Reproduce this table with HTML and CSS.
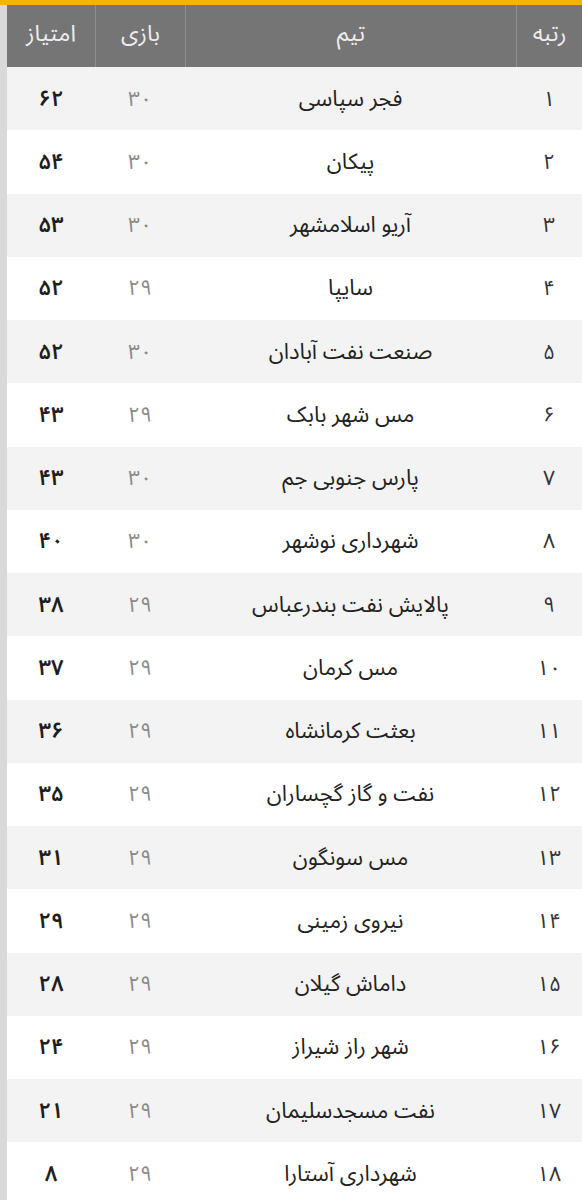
FILE: index.html
```html
<!DOCTYPE html>
<html lang="fa" dir="rtl">
<head>
<meta charset="utf-8">
<link rel="stylesheet" href="styles.css">
</head>
<body>
<div class="page">
  <div class="topbar"></div>
  <div class="frame">
    <div class="strip"></div>
    <div class="table">
      <div class="row head">
        <div class="c rank">رتبه</div>
        <div class="c team">تیم</div>
        <div class="c games">بازی</div>
        <div class="c pts">امتیاز</div>
      </div>
      <div class="row"><div class="c rank">۱</div><div class="c team">فجر سپاسی</div><div class="c games">۳۰</div><div class="c pts">۶۲</div></div>
      <div class="row"><div class="c rank">۲</div><div class="c team">پیکان</div><div class="c games">۳۰</div><div class="c pts">۵۴</div></div>
      <div class="row"><div class="c rank">۳</div><div class="c team">آریو اسلامشهر</div><div class="c games">۳۰</div><div class="c pts">۵۳</div></div>
      <div class="row"><div class="c rank">۴</div><div class="c team">سایپا</div><div class="c games">۲۹</div><div class="c pts">۵۲</div></div>
      <div class="row"><div class="c rank">۵</div><div class="c team">صنعت نفت آبادان</div><div class="c games">۳۰</div><div class="c pts">۵۲</div></div>
      <div class="row"><div class="c rank">۶</div><div class="c team">مس شهر بابک</div><div class="c games">۲۹</div><div class="c pts">۴۳</div></div>
      <div class="row"><div class="c rank">۷</div><div class="c team">پارس جنوبی جم</div><div class="c games">۳۰</div><div class="c pts">۴۳</div></div>
      <div class="row"><div class="c rank">۸</div><div class="c team">شهرداری نوشهر</div><div class="c games">۳۰</div><div class="c pts">۴۰</div></div>
      <div class="row"><div class="c rank">۹</div><div class="c team">پالایش نفت بندرعباس</div><div class="c games">۲۹</div><div class="c pts">۳۸</div></div>
      <div class="row"><div class="c rank">۱۰</div><div class="c team">مس کرمان</div><div class="c games">۲۹</div><div class="c pts">۳۷</div></div>
      <div class="row"><div class="c rank">۱۱</div><div class="c team">بعثت کرمانشاه</div><div class="c games">۲۹</div><div class="c pts">۳۶</div></div>
      <div class="row"><div class="c rank">۱۲</div><div class="c team">نفت و گاز گچساران</div><div class="c games">۲۹</div><div class="c pts">۳۵</div></div>
      <div class="row"><div class="c rank">۱۳</div><div class="c team">مس سونگون</div><div class="c games">۲۹</div><div class="c pts">۳۱</div></div>
      <div class="row"><div class="c rank">۱۴</div><div class="c team">نیروی زمینی</div><div class="c games">۲۹</div><div class="c pts">۲۹</div></div>
      <div class="row"><div class="c rank">۱۵</div><div class="c team">داماش گیلان</div><div class="c games">۲۹</div><div class="c pts">۲۸</div></div>
      <div class="row"><div class="c rank">۱۶</div><div class="c team">شهر راز شیراز</div><div class="c games">۲۹</div><div class="c pts">۲۴</div></div>
      <div class="row"><div class="c rank">۱۷</div><div class="c team">نفت مسجدسلیمان</div><div class="c games">۲۹</div><div class="c pts">۲۱</div></div>
      <div class="row"><div class="c rank">۱۸</div><div class="c team">شهرداری آستارا</div><div class="c games">۲۹</div><div class="c pts">۸</div></div>
    </div>
  </div>
</div>
</body>
</html>
```

FILE: styles.css
```css
html, body {
  margin: 0;
  padding: 0;
  background: #ffffff;
}
body {
  width: 582px;
  height: 1200px;
  overflow: hidden;
  font-family: "Noto Sans Arabic", "Vazirmatn", "DejaVu Sans", sans-serif;
}
.page {
  width: 582px;
}
.topbar {
  height: 5px;
  background: #f4b700;
}
.frame {
  display: flex;
  flex-direction: row-reverse;
}
.strip {
  width: 7px;
  flex: none;
  background: #d9d9d9;
}
.table {
  flex: 1;
}
.row {
  display: grid;
  grid-template-columns: 66px 331px 90px 88px;
  height: 63.25px;
  background: #ffffff;
}
.row:nth-child(even) {
  background: #f3f3f3;
}
.row.head {
  height: 62px;
  background: #757575;
}
.row.head .c {
  border-left: 1px solid #8f8f8f;
  color: #ededed;
  font-size: 23px;
  font-weight: normal;
  padding-bottom: 6px;
}
.row.head .c.pts {
  border-left: none;
}
.c {
  display: flex;
  align-items: center;
  justify-content: center;
  font-size: 22px;
  color: #222222;
}
.c.games {
  color: #8a8a8a;
  font-size: 21px;
}
.c.rank {
  color: #333333;
  font-size: 21px;
}
.c.pts {
  font-weight: 600;
  color: #1e1e1e;
  font-size: 22px;
}
```
